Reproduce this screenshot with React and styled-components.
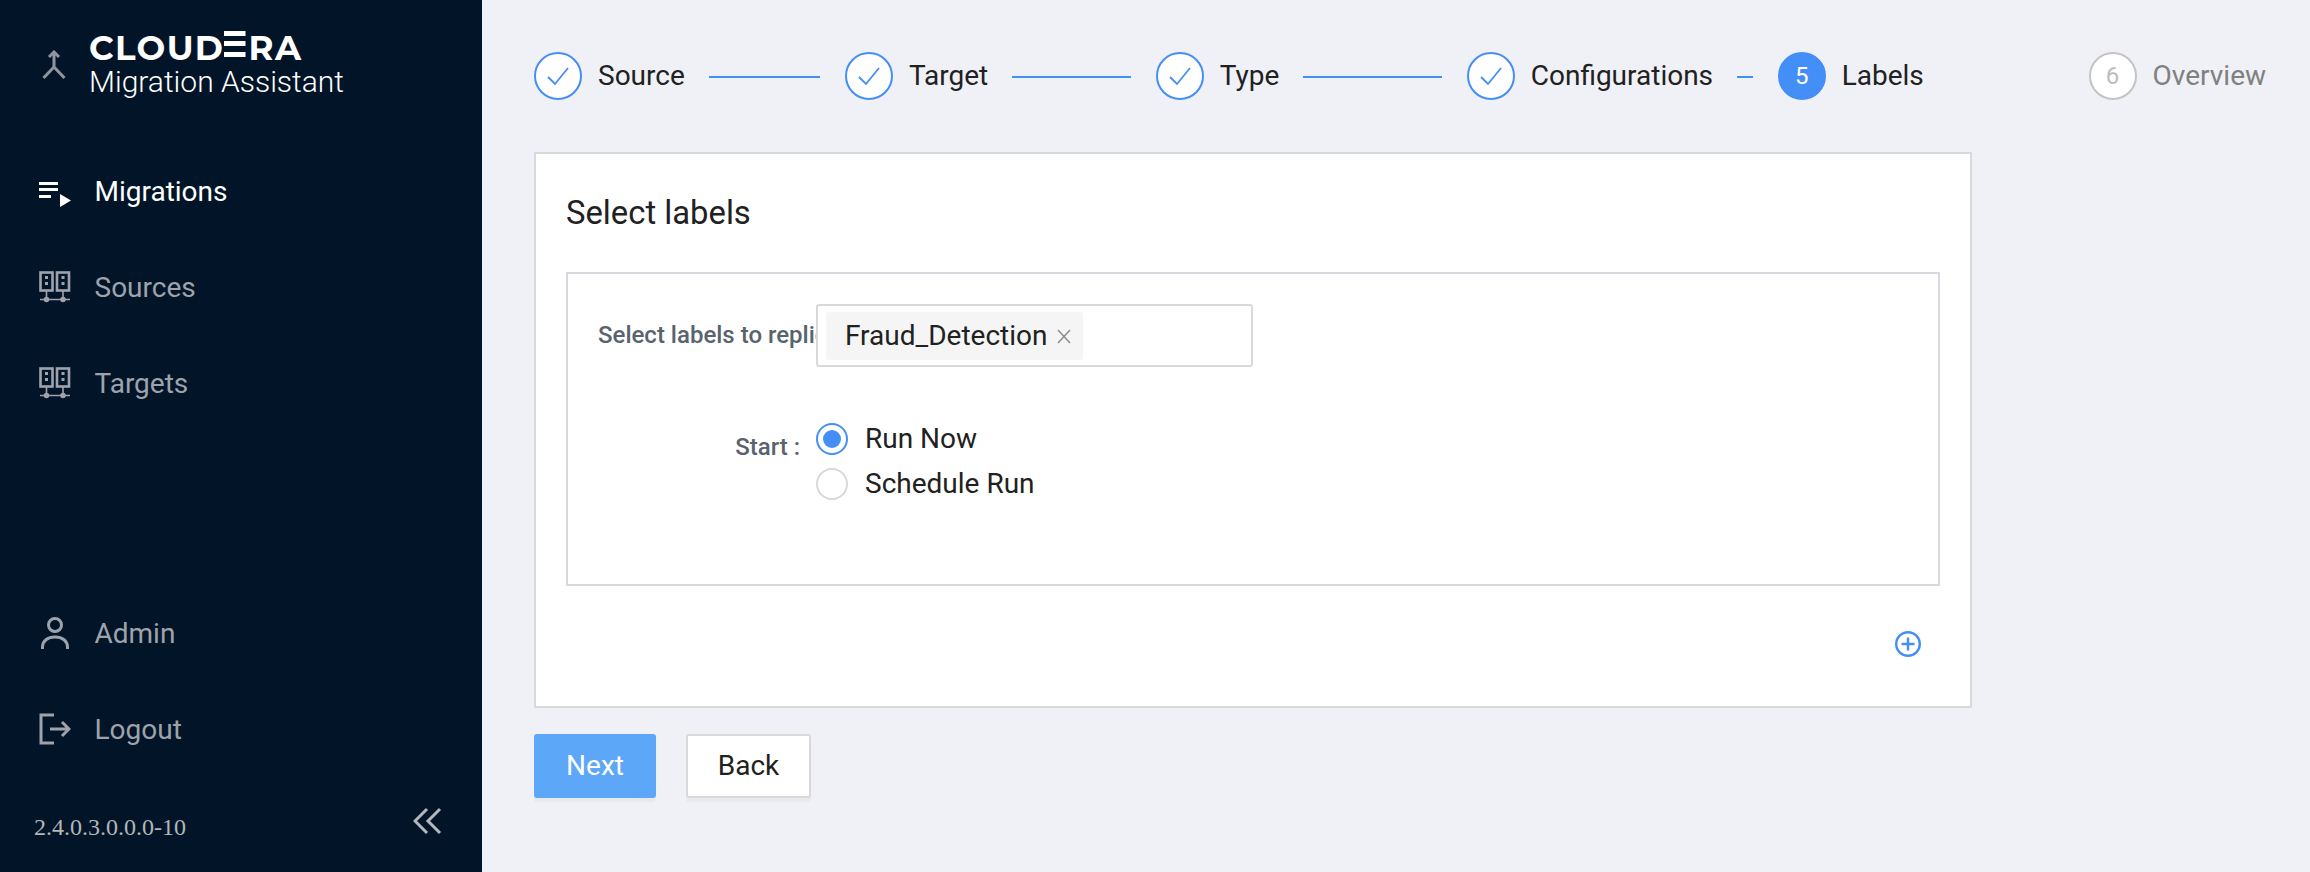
import React from 'react'
import styled, { createGlobalStyle } from 'styled-components'

const GlobalStyle = createGlobalStyle`
  html, body {
    margin: 0;
    padding: 0;
    background: #f0f1f6;
    font-family: Roboto, "Liberation Sans", sans-serif;
  }
  * {
    box-sizing: border-box;
  }
`

const Page = styled.div`
  display: flex;
  height: 872px;
  overflow: hidden;
`
const Sidebar = styled.aside`
  display: flex;
  flex-direction: column;
  flex: none;
  width: 482px;
  background: #021528;
`
const Brand = styled.div`
  display: flex;
  align-items: flex-end;
  gap: 24px;
  height: 101px;
  padding-left: 42px;
`
const BrandMark = styled.svg`
  flex: none;
  width: 24px;
  height: 32px;
  margin-bottom: 19px;
`
const BrandText = styled.div`
  display: flex;
  flex-direction: column;
  margin-left: -1px;
  padding-bottom: 3px;
`
const BrandName = styled.div`
  font-family: Montserrat, Inter, sans-serif;
  font-size: 34px;
  font-weight: 700;
  line-height: 34px;
  letter-spacing: 1.4px;
  color: #fff;
`
const BarredLetter = styled.span`
  color: transparent;
  background: linear-gradient(
    #fff 0 5px,
    transparent 5px 10.5px,
    #fff 10.5px 15.5px,
    transparent 15.5px 21px,
    #fff 21px 26px
  ) no-repeat 0 4px / 86% 26px;
`
const BrandProduct = styled.div`
  font-size: 30px;
  font-weight: 300;
  line-height: 33px;
  color: #fff;
`
const Nav = styled.nav`
  display: flex;
  flex-direction: column;
  padding-top: 42px;
`
const NavItem = styled.div`
  display: flex;
  align-items: center;
  gap: 23.5px;
  height: 96px;
  padding-left: 39px;
  font-size: 28px;
  font-weight: 400;
  color: ${(props) => (props.active ? '#fff' : '#9ea3ab')};
`
const NavIcon = styled.svg`
  flex: none;
  width: 32px;
  height: 32px;
`
const SidebarBottom = styled.div`
  display: flex;
  flex-direction: column;
  margin-top: auto;
`
const SidebarFooter = styled.div`
  display: flex;
  align-items: center;
  justify-content: space-between;
  height: 95px;
  padding: 0 39px 8px 34px;
  color: #b3b6ba;
`
const Version = styled.span`
  margin-top: 14px;
  font-family: "Liberation Serif", serif;
  font-size: 24px;
`
const Collapse = styled.svg`
  width: 30px;
  height: 30px;
`
const Main = styled.main`
  flex: 1;
  min-width: 0;
  padding: 52px 44px 0 52px;
`
const Steps = styled.div`
  display: flex;
  height: 48px;
`
const Step = styled.div`
  display: flex;
  align-items: center;
  flex: ${(props) => (props.last ? 'none' : '1 1 0')};
  min-width: 0;
`
const StepCircle = styled.div`
  display: flex;
  align-items: center;
  justify-content: center;
  flex: none;
  width: 48px;
  height: 48px;
  margin-right: 16px;
  border: 2px solid ${(props) => (props.status === 'wait' ? '#c4c4c6' : '#448ef7')};
  border-radius: 50%;
  background: ${(props) => (props.status === 'active' ? '#448ef7' : '#fff')};
  font-size: 24px;
  color: ${(props) => (props.status === 'active' ? '#fff' : '#bdbdbd')};
`
const StepTitle = styled.span`
  flex: none;
  margin-top: -2px;
  font-size: 28px;
  color: ${(props) => (props.status === 'wait' ? '#808080' : '#212121')};
`
const StepLine = styled.div`
  flex: 1;
  height: 2px;
  margin: 2px 25px 0 24px;
  background: ${(props) => (props.status === 'active' ? '#eff1f0' : '#448ef7')};
`
const Card = styled.section`
  display: flex;
  flex-direction: column;
  width: 1438px;
  height: 556px;
  margin-top: 52px;
  padding: 0 30px;
  border: 2px solid #d8d9de;
  background: #fff;
`
const CardTitle = styled.h2`
  margin: 0;
  padding: 37px 0 0;
  height: 118px;
  font-size: 32.8px;
  font-weight: 400;
  line-height: 44px;
  color: #212121;
`
const FormBox = styled.div`
  display: flex;
  flex-direction: column;
  gap: 49px;
  height: 314px;
  padding: 30px 30px 0;
  border: 2px solid #d8d9de;
`
const FormRow = styled.div`
  display: flex;
`
const Label = styled.label`
  flex: none;
  width: 218px;
  padding-right: 16px;
  overflow: hidden;
  font-size: 24px;
  font-weight: 500;
  line-height: 63px;
  text-align: right;
  white-space: nowrap;
  color: #59636e;
`
const SelectBox = styled.div`
  display: flex;
  align-items: center;
  width: 437px;
  height: 63px;
  padding-left: 8px;
  border: 2px solid #d9d9d9;
  border-radius: 3px;
`
const Tag = styled.div`
  display: flex;
  align-items: center;
  gap: 10px;
  height: 48px;
  padding: 0 12px 0 19px;
  border-radius: 3px;
  background: #f5f5f5;
  font-size: 28px;
  color: #212121;
`
const TagClose = styled.svg`
  width: 14px;
  height: 15px;
  margin-top: 2px;
`
const RadioGroup = styled.div`
  display: flex;
  flex-direction: column;
`
const RadioRow = styled.div`
  display: flex;
  align-items: center;
  gap: 17px;
  height: 45px;
  font-size: 28px;
  color: #212121;
`
const RadioDot = styled.span`
  display: flex;
  align-items: center;
  justify-content: center;
  width: 32px;
  height: 32px;
  border: 2px solid ${(props) => (props.checked ? '#448ef7' : '#d9d9d9')};
  border-radius: 50%;

  &::after {
    content: '';
    width: 18px;
    height: 18px;
    border-radius: 50%;
    background: ${(props) => (props.checked ? '#448ef7' : 'transparent')};
  }
`
const AddRow = styled.div`
  display: flex;
  justify-content: flex-end;
  padding: 44px 18px 0 0;
`
const AddIcon = styled.svg`
  width: 28px;
  height: 28px;
`
const Actions = styled.div`
  display: flex;
  gap: 30px;
  margin-top: 26px;
`
const Button = styled.button`
  height: 64px;
  padding: 0 0 2px;
  width: ${(props) => (props.primary ? '122px' : '125px')};
  border: 2px solid ${(props) => (props.primary ? '#5ca7f8' : '#d9d9d9')};
  border-radius: 3px;
  background: ${(props) => (props.primary ? '#5ca7f8' : '#fff')};
  box-shadow: 0 4px 0 rgba(0, 0, 0, 0.03);
  font-family: inherit;
  font-size: 28px;
  color: ${(props) => (props.primary ? '#fff' : '#212121')};
`

const steps = [
  { title: 'Source', status: 'done' },
  { title: 'Target', status: 'done' },
  { title: 'Type', status: 'done' },
  { title: 'Configurations', status: 'done' },
  { title: 'Labels', status: 'active', number: 5 },
  { title: 'Overview', status: 'wait', number: 6 },
]

const ServerIcon = () => (
  <NavIcon viewBox="0 0 32 32" fill="none" stroke="currentColor">
    <rect x="1.5" y="1.5" width="12" height="18" strokeWidth="2.6" />
    <rect x="18" y="1.5" width="12" height="18" strokeWidth="2.6" />
    <path d="M7.5 20v9M24 20v9M1 28.5h30" strokeWidth="1.6" />
    <circle cx="7.5" cy="28.5" r="2.8" fill="currentColor" stroke="none" />
    <circle cx="24" cy="28.5" r="2.8" fill="currentColor" stroke="none" />
    <path d="M6 6.5h3M6 12.5h3M22.5 6.5h3M22.5 12.5h3" strokeWidth="2.8" />
  </NavIcon>
)

const App = () => (
  <Page>
    <GlobalStyle />
    <Sidebar>
      <Brand>
        <BrandMark viewBox="0 0 24 32" fill="none" stroke="#8e959e" strokeWidth="3">
          <path d="M12 2v15M7 7l5-5 5 5M12 17L1.5 28M12 17l10.5 11" />
        </BrandMark>
        <BrandText>
          <BrandName>
            CLOUD<BarredLetter>E</BarredLetter>RA
          </BrandName>
          <BrandProduct>Migration Assistant</BrandProduct>
        </BrandText>
      </Brand>
      <Nav>
        <NavItem active>
          <NavIcon viewBox="0 0 32 32" fill="#fff">
            <path d="M0 7h19v3H0zM0 13h19v3H0zM0 20h12v3H0zM21 19l11 6.5-11 6.5z" />
          </NavIcon>
          Migrations
        </NavItem>
        <NavItem>
          <ServerIcon />
          Sources
        </NavItem>
        <NavItem>
          <ServerIcon />
          Targets
        </NavItem>
      </Nav>
      <SidebarBottom>
        <NavItem>
          <NavIcon viewBox="0 0 32 32" fill="none" stroke="currentColor" strokeWidth="3">
            <circle cx="16" cy="8" r="6.5" />
            <path d="M3.5 32v-2c0-6 5-10 12.5-10s12.5 4 12.5 10v2" />
          </NavIcon>
          Admin
        </NavItem>
        <NavItem>
          <NavIcon viewBox="0 0 32 32" fill="none" stroke="currentColor" strokeWidth="3">
            <path d="M15 2H2v28h13M11 16h19M23 9l7 7-7 7" />
          </NavIcon>
          Logout
        </NavItem>
        <SidebarFooter>
          <Version>2.4.0.3.0.0.0-10</Version>
          <Collapse viewBox="0 0 30 30" fill="none" stroke="currentColor" strokeWidth="3">
            <path d="M14 3L2 15l12 12M27 3L15 15l12 12" />
          </Collapse>
        </SidebarFooter>
      </SidebarBottom>
    </Sidebar>
    <Main>
      <Steps>
        {steps.map((step, index) => (
          <Step key={step.title} last={index === steps.length - 1}>
            <StepCircle status={step.status}>
              {step.number || (
                <svg width="24" height="20" viewBox="0 0 24 20" fill="none" stroke="#448ef7" strokeWidth="1.8">
                  <path d="M2 11l7 7L22 2" />
                </svg>
              )}
            </StepCircle>
            <StepTitle status={step.status}>{step.title}</StepTitle>
            {index < steps.length - 1 && <StepLine status={step.status} />}
          </Step>
        ))}
      </Steps>
      <Card>
        <CardTitle>Select labels</CardTitle>
        <FormBox>
          <FormRow>
            <Label>Select labels to replicate :</Label>
            <SelectBox>
              <Tag>
                Fraud_Detection
                <TagClose viewBox="0 0 14 15" fill="none" stroke="#8c8c8c" strokeWidth="1.5">
                  <path d="M1 1l12 13M13 1L1 14" />
                </TagClose>
              </Tag>
            </SelectBox>
          </FormRow>
          <FormRow>
            <Label>Start :</Label>
            <RadioGroup>
              <RadioRow>
                <RadioDot checked />
                Run Now
              </RadioRow>
              <RadioRow>
                <RadioDot />
                Schedule Run
              </RadioRow>
            </RadioGroup>
          </FormRow>
        </FormBox>
        <AddRow>
          <AddIcon viewBox="0 0 28 28" fill="none" stroke="#448ef7" strokeWidth="2.4">
            <circle cx="14" cy="14" r="11.8" />
            <path d="M14 7.5v13M7.5 14h13" />
          </AddIcon>
        </AddRow>
      </Card>
      <Actions>
        <Button primary>Next</Button>
        <Button>Back</Button>
      </Actions>
    </Main>
  </Page>
)

export default App
